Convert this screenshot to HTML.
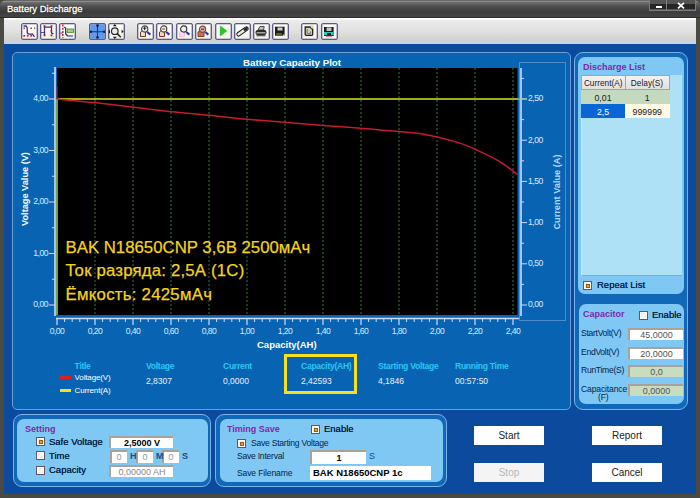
<!DOCTYPE html>
<html><head><meta charset="utf-8"><style>
*{margin:0;padding:0;box-sizing:border-box}
html,body{width:700px;height:498px;overflow:hidden;background:#4a4a42;font-family:"Liberation Sans",sans-serif}
.a{position:absolute;white-space:nowrap}
#titlebar{left:0;top:0;width:700px;height:18px;background:linear-gradient(#555 0,#8c8c8c 1.5px,#6c6c6c 2.5px,#4c4c4c 7px,#3c3c3c 12px,#444 16.5px,#1e1e1e 18px);border-radius:6px 6px 0 0}
#ttl{left:7px;top:3px;font-size:9.5px;color:#fff;-webkit-text-stroke:0.3px #fff;text-shadow:0 0 2px #111}
#toolbar{left:4px;top:18px;width:692px;height:26px;background:linear-gradient(#fff 0,#fff 1px,#ececec 2px,#e2e2e2 12px,#d2d0ce 23.5px,#c2d6e6 24.5px,#c2d6e6 26px)}
#main{left:4px;top:44px;width:692px;height:450px;background:#0c4a9e}
.tb{width:17px;height:17px;top:23px;border:1px solid #5c5c88;border-radius:2px;background:linear-gradient(#fffffa,#f4f2e4);overflow:hidden;box-shadow:inset 0 0 0 0.6px #9a9cc0}
.tb svg{position:absolute;left:0;top:0}
.ppo{border-radius:9px;background:#1268b8;border:1px solid #78b2e8}
.ppi{border-radius:7px;background:#80c8f4}
.ptl{font-size:9px;font-weight:bold;color:#8226a8}
.lbl{font-size:8.5px;color:#062446;text-shadow:0 0 0.3px #062446}
.chk{width:9px;height:9px;border:1px solid #5c5866;background:linear-gradient(135deg,#f0dccc,#fff6ee 55%,#e6d6c8);box-shadow:inset 0 0 0 1px #fffaf4}
.chk.on:after{content:"";position:absolute;left:1.5px;top:1.5px;width:4px;height:4px;box-sizing:border-box;background:#e4a030;border:1px solid #985a18}
.inp{background:#fff;border-top:2px solid #a8a298;border-left:2px solid #a8a298;font-size:9px;text-align:center;color:#333}
.wb{background:#fff;font-size:10px;color:#222;text-align:center}
.st{font-size:8.6px;letter-spacing:-0.3px;font-weight:bold;color:#2cc6f2}
.sv{font-size:8.5px;color:#e8f0ff}
</style></head><body>
<div id="titlebar" class="a"></div>
<div id="ttl" class="a">Battery Discharge</div>
<div class="a" style="left:649px;top:0;width:47px;height:11px;background:#555;border:1px solid #7c7c7c;border-top:none"></div>
<div class="a" style="left:650px;top:3.5px;width:16px;height:5.5px;background:#262626"></div>
<div class="a" style="left:667px;top:3.5px;width:28px;height:5.5px;background:#262626"></div>
<div class="a" style="left:666px;top:0;width:1px;height:10px;background:#7c7c7c"></div>
<div class="a" style="left:656px;top:6px;width:6px;height:2px;background:#fff"></div>
<svg class="a" style="left:676.5px;top:2px" width="8" height="7"><path d="M1 0.8L7 6.4M7 0.8L1 6.4" stroke="#fff" stroke-width="1.7"/></svg>
<div id="toolbar" class="a"></div>
<div id="main" class="a"></div>
<div class="a tb" style="left:20.5px;"><svg width="17" height="17" viewBox="0 0 17 17" style="left:-1px;top:-1px"><g fill="#a04030"><rect x="2.5" y="4.5" width="1.5" height="1.5"/><rect x="9.5" y="4.5" width="1.5" height="1.5"/><rect x="13" y="4.5" width="1.3" height="1.3"/></g><g fill="#e01030"><rect x="2.3" y="12" width="1.8" height="1.6"/><rect x="5.8" y="12" width="1.8" height="1.6"/><rect x="9.3" y="12" width="1.8" height="1.6"/></g><rect x="11.5" y="9.5" width="1.3" height="1.3" fill="#f0e040"/><path d="M2.5,3 H5 L6.2,4.6 V9.5 Q6.6,11 8,11.2 H11.5 L13.5,13.8" fill="none" stroke="#4a20a0" stroke-width="1.3"/></svg></div>
<div class="a tb" style="left:40px;"><svg width="17" height="17" viewBox="0 0 17 17" style="left:-1px;top:-1px"><path d="M0.5,9.5 H4.5" stroke="#4050c0" stroke-width="1.2"/><path d="M4.5,3 V12.5 M4.5,4.2 H11.5 V10 L13.5,10.8" fill="none" stroke="#4a20a0" stroke-width="1.3"/><g fill="#903020"><rect x="3.6" y="2.2" width="1.8" height="1.8"/><rect x="3.6" y="11.5" width="1.8" height="1.8"/><rect x="10.6" y="2.2" width="1.8" height="1.8"/><rect x="10.6" y="11.5" width="1.8" height="1.8"/><rect x="10.6" y="7" width="1.6" height="1.6" fill="#c02030"/></g><g fill="#f0d060"><rect x="3" y="7" width="1.2" height="1.2"/><rect x="13" y="13" width="1.2" height="1.2"/></g></svg></div>
<div class="a tb" style="left:59px;"><svg width="17" height="17" viewBox="0 0 17 17" style="left:-1px;top:-1px"><path d="M3.8,1.5 V15" stroke="#e02030" stroke-width="1.6" stroke-dasharray="2,1.2"/><path d="M0,10 H3.8" stroke="#4060c0" stroke-width="1.2"/><path d="M5.2,4 L6.7,5 V11 L8.7,13 H14" fill="none" stroke="#202870" stroke-width="1.2"/><rect x="8.2" y="6" width="6.2" height="3.4" fill="#a8d088" stroke="#509030" stroke-width="0.9"/></svg></div>
<div class="a tb" style="left:88.7px;background:#5b9cf2;border-color:#3a62c0;"><svg width="17" height="17" viewBox="0 0 17 17" style="left:-1px;top:-1px"><path d="M8.5,2.5 V14.5 M1.5,8.8 H15.5" stroke="#1a3080" stroke-width="1.1"/><g fill="#101840"><circle cx="8.5" cy="2.5" r="1.3"/><circle cx="8.5" cy="14.5" r="1.3"/><circle cx="1.8" cy="8.8" r="1.2"/><circle cx="15.2" cy="8.8" r="1.2"/></g></svg></div>
<div class="a tb" style="left:108.2px;"><svg width="17" height="17" viewBox="0 0 17 17" style="left:-1px;top:-1px"><circle cx="6.8" cy="8.2" r="3.3" fill="#e8eee0" stroke="#282828" stroke-width="1.2"/><path d="M9.2,10.6 L12.8,14.2" stroke="#282828" stroke-width="1.6"/><g fill="#181818"><path d="M4.8,3.3 H8.8 L6.8,1.1Z"/><path d="M4.8,13.8 H8.8 L6.8,16Z"/><path d="M2,6.4 V10.4 L0.2,8.4Z"/><path d="M13.6,6.4 V10.4 L15.6,8.4Z"/></g></svg></div>
<div class="a tb" style="left:137.1px;"><svg width="17" height="17" viewBox="0 0 17 17" style="left:-1px;top:-1px"><path d="M3.5,13.5 V9 L5.5,7.5 L8.5,9 V13.5Z" fill="#f0e0c8" stroke="#703820" stroke-width="1"/><circle cx="7.7" cy="6" r="3.1" fill="#f4f4ee" stroke="#484848" stroke-width="1.2"/><path d="M6.2,5.2 H9.2 M7.7,3.7 V7.2" stroke="#202020" stroke-width="1"/><path d="M10.3,9 L13.3,11.6" stroke="#3030c0" stroke-width="2.2"/></svg></div>
<div class="a tb" style="left:156.4px;"><svg width="17" height="17" viewBox="0 0 17 17" style="left:-1px;top:-1px"><path d="M3.5,13.5 V9 L5.5,7.5 L8.5,9 V13.5Z" fill="#f0d8b8" stroke="#903020" stroke-width="1"/><circle cx="7.7" cy="6" r="3.1" fill="#f4f4ee" stroke="#484848" stroke-width="1.2"/><path d="M6.2,6 H9.2" stroke="#b02020" stroke-width="1.1"/><path d="M10.3,9 L13.3,11.6" stroke="#3030c0" stroke-width="2.2"/></svg></div>
<div class="a tb" style="left:175.7px;"><svg width="17" height="17" viewBox="0 0 17 17" style="left:-1px;top:-1px"><path d="M3.5,13.5 V9 L5.5,7.5 L8.5,9 V13.5Z" fill="#f4dce4" stroke="#e8b8c8" stroke-width="0.8"/><circle cx="7.7" cy="6" r="3.1" fill="#f4eef4" stroke="#383838" stroke-width="1.2"/><path d="M10.3,9 L13.3,11.6" stroke="#3030c0" stroke-width="2.2"/></svg></div>
<div class="a tb" style="left:195.3px;"><svg width="17" height="17" viewBox="0 0 17 17" style="left:-1px;top:-1px"><path d="M3,13.5 V9 L5.5,7 L9,9 V13.5Z" fill="#c87050" stroke="#904020" stroke-width="1"/><circle cx="7.5" cy="6.3" r="3.1" fill="#d8b8a8" stroke="#705040" stroke-width="1.2"/><rect x="6" y="5.6" width="3" height="1.5" fill="#c02020"/><path d="M10.3,9 L13.3,11.6" stroke="#3030c0" stroke-width="2.2"/></svg></div>
<div class="a tb" style="left:214.5px;"><svg width="17" height="17" viewBox="0 0 17 17" style="left:-1px;top:-1px"><path d="M5.4,3.1 L11.7,8 L5.4,12.7Z" fill="#22cc22" stroke="#18a018" stroke-width="0.6"/></svg></div>
<div class="a tb" style="left:233.6px;"><svg width="17" height="17" viewBox="0 0 17 17" style="left:-1px;top:-1px"><path d="M4.6,11.2 L12.4,5.6" stroke="#1e1e1e" stroke-width="4.6" stroke-linecap="round"/><path d="M4.6,11.2 L12.4,5.6" stroke="#ecece4" stroke-width="2.6" stroke-linecap="round"/><path d="M10.9,6.7 L12.4,5.6" stroke="#2a2a2a" stroke-width="2.8" stroke-linecap="round"/></svg></div>
<div class="a tb" style="left:253.2px;"><svg width="17" height="17" viewBox="0 0 17 17" style="left:-1px;top:-1px"><path d="M5,7 L6.8,3.6 H11.2 L10.6,7Z" fill="#c8c8c8" stroke="#303030" stroke-width="0.9"/><rect x="2.5" y="7" width="11" height="5" rx="2.2" fill="#2a2a2a"/><rect x="3.5" y="9.3" width="9" height="1.1" fill="#d8d8c8"/><rect x="3.5" y="12" width="9" height="1.3" fill="#606060"/></svg></div>
<div class="a tb" style="left:271.9px;"><svg width="17" height="17" viewBox="0 0 17 17" style="left:-1px;top:-1px"><rect x="3" y="3.7" width="9.6" height="9" fill="#1c1c1c"/><rect x="5.5" y="4.5" width="5" height="3" fill="#d0d0c8"/><rect x="4.3" y="10" width="5.5" height="2.5" fill="#586828"/><rect x="11" y="11.5" width="1.3" height="1.3" fill="#e8e8e0"/></svg></div>
<div class="a tb" style="left:301.2px;"><svg width="17" height="17" viewBox="0 0 17 17" style="left:-1px;top:-1px"><path d="M4.2,4 H9 L11.7,6.6 V11.6 Q11.7,12.4 10.9,12.4 H5 Q4.2,12.4 4.2,11.6Z" fill="#d4ccbc" stroke="#1e1e1e" stroke-width="1.3"/><path d="M6.2,6 V10.5 H9.5 V8.5" fill="none" stroke="#807868" stroke-width="1"/><path d="M9.8,2.2 L12.8,5.6 M12.6,2.4 L10,5.2" stroke="#e8e820" stroke-width="1.2"/></svg></div>
<div class="a tb" style="left:320.5px;"><svg width="17" height="17" viewBox="0 0 17 17" style="left:-1px;top:-1px"><rect x="3" y="4" width="9.6" height="9" fill="#1a1a1a"/><rect x="5.5" y="4.5" width="5" height="3.5" fill="#c4c4c4"/><rect x="3" y="9" width="9.6" height="3" fill="#20d0b4"/><rect x="6" y="10" width="4" height="3" fill="#101030"/><rect x="5" y="12.6" width="6" height="0.9" fill="#e02040"/></svg></div>
<div class="a" style="left:12px;top:52px;width:559px;height:358px;border-radius:5px;background:#0864b2;border:1.5px solid #6a9ed4"></div>
<div class="a" style="left:243px;top:57px;font-size:9.75px;font-weight:bold;color:#fff">Battery Capacity Plot</div>
<svg class="a" style="left:0;top:0" width="700" height="498"><rect x="519.5" y="62.5" width="46" height="258" fill="none" stroke="#4d8ccc" stroke-width="1"/><rect x="57" y="68" width="461" height="247" fill="#000"/><line x1="95.0" y1="68" x2="95.0" y2="315" stroke="#367a3e" stroke-width="1" stroke-dasharray="2,2"/><line x1="133.0" y1="68" x2="133.0" y2="315" stroke="#367a3e" stroke-width="1" stroke-dasharray="2,2"/><line x1="171.0" y1="68" x2="171.0" y2="315" stroke="#367a3e" stroke-width="1" stroke-dasharray="2,2"/><line x1="209.0" y1="68" x2="209.0" y2="315" stroke="#367a3e" stroke-width="1" stroke-dasharray="2,2"/><line x1="247.0" y1="68" x2="247.0" y2="315" stroke="#367a3e" stroke-width="1" stroke-dasharray="2,2"/><line x1="285.0" y1="68" x2="285.0" y2="315" stroke="#367a3e" stroke-width="1" stroke-dasharray="2,2"/><line x1="323.0" y1="68" x2="323.0" y2="315" stroke="#367a3e" stroke-width="1" stroke-dasharray="2,2"/><line x1="361.0" y1="68" x2="361.0" y2="315" stroke="#367a3e" stroke-width="1" stroke-dasharray="2,2"/><line x1="399.0" y1="68" x2="399.0" y2="315" stroke="#367a3e" stroke-width="1" stroke-dasharray="2,2"/><line x1="437.0" y1="68" x2="437.0" y2="315" stroke="#367a3e" stroke-width="1" stroke-dasharray="2,2"/><line x1="475.0" y1="68" x2="475.0" y2="315" stroke="#367a3e" stroke-width="1" stroke-dasharray="2,2"/><line x1="513.0" y1="68" x2="513.0" y2="315" stroke="#367a3e" stroke-width="1" stroke-dasharray="2,2"/><line x1="55" y1="67" x2="55" y2="316" stroke="#c8dcff" stroke-width="1.6"/><line x1="49" y1="305.0" x2="55" y2="305.0" stroke="#c8dcff" stroke-width="1"/><line x1="52" y1="279.25" x2="55" y2="279.25" stroke="#c8dcff" stroke-width="1"/><line x1="49" y1="253.5" x2="55" y2="253.5" stroke="#c8dcff" stroke-width="1"/><line x1="52" y1="227.75" x2="55" y2="227.75" stroke="#c8dcff" stroke-width="1"/><line x1="49" y1="202.0" x2="55" y2="202.0" stroke="#c8dcff" stroke-width="1"/><line x1="52" y1="176.25" x2="55" y2="176.25" stroke="#c8dcff" stroke-width="1"/><line x1="49" y1="150.5" x2="55" y2="150.5" stroke="#c8dcff" stroke-width="1"/><line x1="52" y1="124.75" x2="55" y2="124.75" stroke="#c8dcff" stroke-width="1"/><line x1="49" y1="99.0" x2="55" y2="99.0" stroke="#c8dcff" stroke-width="1"/><line x1="52" y1="73.25" x2="55" y2="73.25" stroke="#c8dcff" stroke-width="1"/><line x1="521" y1="68" x2="521" y2="316" stroke="#c8dcff" stroke-width="1.6"/><line x1="521" y1="305.0" x2="527" y2="305.0" stroke="#c8dcff" stroke-width="1"/><line x1="521" y1="284.4" x2="524" y2="284.4" stroke="#c8dcff" stroke-width="1"/><line x1="521" y1="263.8" x2="527" y2="263.8" stroke="#c8dcff" stroke-width="1"/><line x1="521" y1="243.2" x2="524" y2="243.2" stroke="#c8dcff" stroke-width="1"/><line x1="521" y1="222.6" x2="527" y2="222.6" stroke="#c8dcff" stroke-width="1"/><line x1="521" y1="202.0" x2="524" y2="202.0" stroke="#c8dcff" stroke-width="1"/><line x1="521" y1="181.39999999999998" x2="527" y2="181.39999999999998" stroke="#c8dcff" stroke-width="1"/><line x1="521" y1="160.79999999999998" x2="524" y2="160.79999999999998" stroke="#c8dcff" stroke-width="1"/><line x1="521" y1="140.2" x2="527" y2="140.2" stroke="#c8dcff" stroke-width="1"/><line x1="521" y1="119.6" x2="524" y2="119.6" stroke="#c8dcff" stroke-width="1"/><line x1="521" y1="99.0" x2="527" y2="99.0" stroke="#c8dcff" stroke-width="1"/><line x1="521" y1="78.39999999999998" x2="524" y2="78.39999999999998" stroke="#c8dcff" stroke-width="1"/><line x1="56" y1="318.5" x2="519" y2="318.5" stroke="#c8dcff" stroke-width="1.4"/><line x1="57.0" y1="318" x2="57.0" y2="325" stroke="#c8dcff" stroke-width="1.2"/><line x1="64.6" y1="318" x2="64.6" y2="322" stroke="#c8dcff" stroke-width="1"/><line x1="72.2" y1="318" x2="72.2" y2="322" stroke="#c8dcff" stroke-width="1"/><line x1="79.8" y1="318" x2="79.8" y2="322" stroke="#c8dcff" stroke-width="1"/><line x1="87.4" y1="318" x2="87.4" y2="322" stroke="#c8dcff" stroke-width="1"/><line x1="95.0" y1="318" x2="95.0" y2="325" stroke="#c8dcff" stroke-width="1.2"/><line x1="102.6" y1="318" x2="102.6" y2="322" stroke="#c8dcff" stroke-width="1"/><line x1="110.2" y1="318" x2="110.2" y2="322" stroke="#c8dcff" stroke-width="1"/><line x1="117.8" y1="318" x2="117.8" y2="322" stroke="#c8dcff" stroke-width="1"/><line x1="125.4" y1="318" x2="125.4" y2="322" stroke="#c8dcff" stroke-width="1"/><line x1="133.0" y1="318" x2="133.0" y2="325" stroke="#c8dcff" stroke-width="1.2"/><line x1="140.6" y1="318" x2="140.6" y2="322" stroke="#c8dcff" stroke-width="1"/><line x1="148.2" y1="318" x2="148.2" y2="322" stroke="#c8dcff" stroke-width="1"/><line x1="155.8" y1="318" x2="155.8" y2="322" stroke="#c8dcff" stroke-width="1"/><line x1="163.4" y1="318" x2="163.4" y2="322" stroke="#c8dcff" stroke-width="1"/><line x1="171.0" y1="318" x2="171.0" y2="325" stroke="#c8dcff" stroke-width="1.2"/><line x1="178.6" y1="318" x2="178.6" y2="322" stroke="#c8dcff" stroke-width="1"/><line x1="186.2" y1="318" x2="186.2" y2="322" stroke="#c8dcff" stroke-width="1"/><line x1="193.8" y1="318" x2="193.8" y2="322" stroke="#c8dcff" stroke-width="1"/><line x1="201.4" y1="318" x2="201.4" y2="322" stroke="#c8dcff" stroke-width="1"/><line x1="209.0" y1="318" x2="209.0" y2="325" stroke="#c8dcff" stroke-width="1.2"/><line x1="216.6" y1="318" x2="216.6" y2="322" stroke="#c8dcff" stroke-width="1"/><line x1="224.2" y1="318" x2="224.2" y2="322" stroke="#c8dcff" stroke-width="1"/><line x1="231.8" y1="318" x2="231.8" y2="322" stroke="#c8dcff" stroke-width="1"/><line x1="239.4" y1="318" x2="239.4" y2="322" stroke="#c8dcff" stroke-width="1"/><line x1="247.0" y1="318" x2="247.0" y2="325" stroke="#c8dcff" stroke-width="1.2"/><line x1="254.6" y1="318" x2="254.6" y2="322" stroke="#c8dcff" stroke-width="1"/><line x1="262.2" y1="318" x2="262.2" y2="322" stroke="#c8dcff" stroke-width="1"/><line x1="269.8" y1="318" x2="269.8" y2="322" stroke="#c8dcff" stroke-width="1"/><line x1="277.4" y1="318" x2="277.4" y2="322" stroke="#c8dcff" stroke-width="1"/><line x1="285.0" y1="318" x2="285.0" y2="325" stroke="#c8dcff" stroke-width="1.2"/><line x1="292.6" y1="318" x2="292.6" y2="322" stroke="#c8dcff" stroke-width="1"/><line x1="300.2" y1="318" x2="300.2" y2="322" stroke="#c8dcff" stroke-width="1"/><line x1="307.8" y1="318" x2="307.8" y2="322" stroke="#c8dcff" stroke-width="1"/><line x1="315.4" y1="318" x2="315.4" y2="322" stroke="#c8dcff" stroke-width="1"/><line x1="323.0" y1="318" x2="323.0" y2="325" stroke="#c8dcff" stroke-width="1.2"/><line x1="330.6" y1="318" x2="330.6" y2="322" stroke="#c8dcff" stroke-width="1"/><line x1="338.2" y1="318" x2="338.2" y2="322" stroke="#c8dcff" stroke-width="1"/><line x1="345.8" y1="318" x2="345.8" y2="322" stroke="#c8dcff" stroke-width="1"/><line x1="353.4" y1="318" x2="353.4" y2="322" stroke="#c8dcff" stroke-width="1"/><line x1="361.0" y1="318" x2="361.0" y2="325" stroke="#c8dcff" stroke-width="1.2"/><line x1="368.6" y1="318" x2="368.6" y2="322" stroke="#c8dcff" stroke-width="1"/><line x1="376.2" y1="318" x2="376.2" y2="322" stroke="#c8dcff" stroke-width="1"/><line x1="383.8" y1="318" x2="383.8" y2="322" stroke="#c8dcff" stroke-width="1"/><line x1="391.4" y1="318" x2="391.4" y2="322" stroke="#c8dcff" stroke-width="1"/><line x1="399.0" y1="318" x2="399.0" y2="325" stroke="#c8dcff" stroke-width="1.2"/><line x1="406.6" y1="318" x2="406.6" y2="322" stroke="#c8dcff" stroke-width="1"/><line x1="414.2" y1="318" x2="414.2" y2="322" stroke="#c8dcff" stroke-width="1"/><line x1="421.8" y1="318" x2="421.8" y2="322" stroke="#c8dcff" stroke-width="1"/><line x1="429.4" y1="318" x2="429.4" y2="322" stroke="#c8dcff" stroke-width="1"/><line x1="437.0" y1="318" x2="437.0" y2="325" stroke="#c8dcff" stroke-width="1.2"/><line x1="444.6" y1="318" x2="444.6" y2="322" stroke="#c8dcff" stroke-width="1"/><line x1="452.2" y1="318" x2="452.2" y2="322" stroke="#c8dcff" stroke-width="1"/><line x1="459.8" y1="318" x2="459.8" y2="322" stroke="#c8dcff" stroke-width="1"/><line x1="467.4" y1="318" x2="467.4" y2="322" stroke="#c8dcff" stroke-width="1"/><line x1="475.0" y1="318" x2="475.0" y2="325" stroke="#c8dcff" stroke-width="1.2"/><line x1="482.6" y1="318" x2="482.6" y2="322" stroke="#c8dcff" stroke-width="1"/><line x1="490.2" y1="318" x2="490.2" y2="322" stroke="#c8dcff" stroke-width="1"/><line x1="497.8" y1="318" x2="497.8" y2="322" stroke="#c8dcff" stroke-width="1"/><line x1="505.4" y1="318" x2="505.4" y2="322" stroke="#c8dcff" stroke-width="1"/><line x1="513.0" y1="318" x2="513.0" y2="325" stroke="#c8dcff" stroke-width="1.2"/><line x1="57" y1="315" x2="57" y2="99" stroke="#70a050" stroke-width="2"/><line x1="517.5" y1="68" x2="517.5" y2="315" stroke="#0a3a0a" stroke-width="1"/><polyline points="57,99 518,99" fill="none" stroke="#a4aa18" stroke-width="1.8"/><line x1="518" y1="99" x2="527" y2="99" stroke="#a8c8a0" stroke-width="1"/><line x1="57" y1="86" x2="57" y2="99" stroke="#903050" stroke-width="1.2"/><path d="M57,99 C63.3,99.6 81.8,101.2 94.6,102.6 C107.4,104.0 121.2,105.8 134,107.3 C146.8,108.8 159.2,110.4 171.7,111.7 C184.2,113.0 196.4,113.9 209,115.2 C221.6,116.5 233.5,118.0 247,119.3 C260.5,120.5 277.4,121.7 290,122.7 C302.6,123.7 311.1,124.5 322.9,125.4 C334.7,126.3 348.0,127.2 360.6,128.2 C373.2,129.2 387.6,130.6 398.3,131.6 C409.0,132.6 415.0,132.6 425,134.4 C435.0,136.2 449.9,140.1 458.3,142.6 C466.7,145.1 468.5,146.3 475.4,149.4 C482.2,152.5 492.4,157.2 499.4,161.4 C506.4,165.6 514.5,172.3 517.5,174.5" fill="none" stroke="#c41c28" stroke-width="1.5"/></svg>
<div class="a" style="left:18px;width:30px;text-align:right;top:299.4px;font-size:8.6px;letter-spacing:-0.5px;color:#dce8ff">0,00</div>
<div class="a" style="left:18px;width:30px;text-align:right;top:247.9px;font-size:8.6px;letter-spacing:-0.5px;color:#dce8ff">1,00</div>
<div class="a" style="left:18px;width:30px;text-align:right;top:196.4px;font-size:8.6px;letter-spacing:-0.5px;color:#dce8ff">2,00</div>
<div class="a" style="left:18px;width:30px;text-align:right;top:144.9px;font-size:8.6px;letter-spacing:-0.5px;color:#dce8ff">3,00</div>
<div class="a" style="left:18px;width:30px;text-align:right;top:93.4px;font-size:8.6px;letter-spacing:-0.5px;color:#dce8ff">4,00</div>
<div class="a" style="left:528px;top:299.4px;font-size:8.6px;letter-spacing:-0.5px;color:#dce8ff">0,00</div>
<div class="a" style="left:528px;top:258.2px;font-size:8.6px;letter-spacing:-0.5px;color:#dce8ff">0,50</div>
<div class="a" style="left:528px;top:217.0px;font-size:8.6px;letter-spacing:-0.5px;color:#dce8ff">1,00</div>
<div class="a" style="left:528px;top:175.79999999999998px;font-size:8.6px;letter-spacing:-0.5px;color:#dce8ff">1,50</div>
<div class="a" style="left:528px;top:134.6px;font-size:8.6px;letter-spacing:-0.5px;color:#dce8ff">2,00</div>
<div class="a" style="left:528px;top:93.4px;font-size:8.6px;letter-spacing:-0.5px;color:#dce8ff">2,50</div>
<div class="a" style="left:37.0px;width:40px;text-align:center;top:326px;font-size:8.6px;letter-spacing:-0.5px;color:#dce8ff">0,00</div>
<div class="a" style="left:75.0px;width:40px;text-align:center;top:326px;font-size:8.6px;letter-spacing:-0.5px;color:#dce8ff">0,20</div>
<div class="a" style="left:113.0px;width:40px;text-align:center;top:326px;font-size:8.6px;letter-spacing:-0.5px;color:#dce8ff">0,40</div>
<div class="a" style="left:151.0px;width:40px;text-align:center;top:326px;font-size:8.6px;letter-spacing:-0.5px;color:#dce8ff">0,60</div>
<div class="a" style="left:189.0px;width:40px;text-align:center;top:326px;font-size:8.6px;letter-spacing:-0.5px;color:#dce8ff">0,80</div>
<div class="a" style="left:227.0px;width:40px;text-align:center;top:326px;font-size:8.6px;letter-spacing:-0.5px;color:#dce8ff">1,00</div>
<div class="a" style="left:265.0px;width:40px;text-align:center;top:326px;font-size:8.6px;letter-spacing:-0.5px;color:#dce8ff">1,20</div>
<div class="a" style="left:303.0px;width:40px;text-align:center;top:326px;font-size:8.6px;letter-spacing:-0.5px;color:#dce8ff">1,40</div>
<div class="a" style="left:341.0px;width:40px;text-align:center;top:326px;font-size:8.6px;letter-spacing:-0.5px;color:#dce8ff">1,60</div>
<div class="a" style="left:379.0px;width:40px;text-align:center;top:326px;font-size:8.6px;letter-spacing:-0.5px;color:#dce8ff">1,80</div>
<div class="a" style="left:417.0px;width:40px;text-align:center;top:326px;font-size:8.6px;letter-spacing:-0.5px;color:#dce8ff">2,00</div>
<div class="a" style="left:455.0px;width:40px;text-align:center;top:326px;font-size:8.6px;letter-spacing:-0.5px;color:#dce8ff">2,20</div>
<div class="a" style="left:493.0px;width:40px;text-align:center;top:326px;font-size:8.6px;letter-spacing:-0.5px;color:#dce8ff">2,40</div>
<div class="a" style="left:257px;top:338.5px;font-size:9.5px;font-weight:bold;color:#fff">Capacity(AH)</div>
<div class="a" style="left:24.5px;top:189.4px;width:0;height:0"><div class="a" style="left:-45px;top:-6px;width:90px;height:12px;line-height:12px;text-align:center;transform:rotate(-90deg);font-size:9.2px;font-weight:bold;color:#fff">Voltage Value (V)</div></div>
<div class="a" style="left:556.6px;top:192.2px;width:0;height:0"><div class="a" style="left:-45px;top:-6px;width:90px;height:12px;line-height:12px;text-align:center;transform:rotate(-90deg);font-size:9.2px;font-weight:bold;color:#b0daff">Current Value (A)</div></div>
<div class="a" style="left:65.5px;top:238.2px;font-size:16.8px;letter-spacing:0px;color:#f4d41c;-webkit-text-stroke:0.25px #f4d41c">BAK N18650CNP 3,6В 2500мАч</div>
<div class="a" style="left:65.5px;top:261.4px;font-size:16.8px;letter-spacing:0.18px;color:#f4d41c;-webkit-text-stroke:0.25px #f4d41c">Ток разряда: 2,5А (1С)</div>
<div class="a" style="left:65.5px;top:284.59999999999997px;font-size:16.8px;letter-spacing:0.26px;color:#f4d41c;-webkit-text-stroke:0.25px #f4d41c">Ёмкость: 2425мАч</div>
<div class="a st" style="left:74.6px;top:360.5px">Title</div>
<div class="a" style="left:60px;top:376px;width:11px;height:3px;background:#d82020"></div>
<div class="a" style="left:60px;top:389px;width:11px;height:3px;background:#f0e020"></div>
<div class="a" style="left:74.6px;top:373px;font-size:8px;letter-spacing:-0.15px;color:#fff">Voltage(V)</div>
<div class="a" style="left:74.6px;top:385.5px;font-size:8px;letter-spacing:-0.15px;color:#fff">Current(A)</div>
<div class="a st" style="left:146px;top:360.5px">Voltage</div>
<div class="a sv" style="left:146px;top:376px">2,8307</div>
<div class="a st" style="left:223px;top:360.5px">Current</div>
<div class="a sv" style="left:223px;top:376px">0,0000</div>
<div class="a st" style="left:301px;top:360.5px">Capacity(AH)</div>
<div class="a sv" style="left:301px;top:376px">2,42593</div>
<div class="a st" style="left:378px;top:360.5px">Starting Voltage</div>
<div class="a sv" style="left:378px;top:376px">4,1846</div>
<div class="a st" style="left:455px;top:360.5px">Running Time</div>
<div class="a sv" style="left:455px;top:376px">00:57:50</div>
<div class="a" style="left:284px;top:354px;width:73px;height:40px;border:3px solid #f8e020"></div>
<div class="a ppo" style="left:574px;top:52px;width:113.5px;height:358px"></div>
<div class="a ppi" style="left:578px;top:56.5px;width:105.5px;height:237.5px"></div>
<div class="a ptl" style="left:583px;top:62px">Discharge List</div>
<div class="a" style="left:580.5px;top:75px;width:101.5px;height:200.5px;background:#aee0f6;border-bottom:1px solid #8ca4bc;border-left:1px solid #c8e8fa"></div>
<div class="a" style="left:581px;top:75px;width:44.5px;height:14.5px;background:linear-gradient(#f4f2f0,#e2e0de);border:1px solid #a4a4a4;font-size:8.3px;color:#202020;text-align:center;line-height:14px;">Current(A)</div>
<div class="a" style="left:624.5px;top:75px;width:45px;height:14.5px;background:linear-gradient(#f4f2f0,#e2e0de);border:1px solid #a4a4a4;font-size:8.3px;color:#202020;text-align:center;line-height:14px;">Delay(S)</div>
<div class="a" style="left:581px;top:89.5px;width:44px;height:14.5px;background:#c4dac0;font-size:8.3px;color:#202020;text-align:center;line-height:14px;font-size:8.8px;line-height:16.5px">0,01</div>
<div class="a" style="left:625px;top:89.5px;width:44.5px;height:14.5px;background:#c4dac0;font-size:8.3px;color:#202020;text-align:center;line-height:14px;font-size:8.8px;line-height:16.5px">1</div>
<div class="a" style="left:581px;top:104px;width:44px;height:14px;background:#0a66d4;font-size:8.3px;color:#202020;text-align:center;line-height:14px;font-size:8.8px;color:#fff;line-height:16.5px">2,5</div>
<div class="a" style="left:625px;top:104px;width:44.5px;height:14px;background:#fdf9e2;font-size:8.3px;color:#202020;text-align:center;line-height:14px;font-size:8.8px;line-height:16.5px">999999</div>
<div class="a chk on" style="left:583px;top:281px"></div>
<div class="a lbl" style="left:597px;top:279px;font-size:9.5px">Repeat List</div>
<div class="a ppi" style="left:578.5px;top:304px;width:105px;height:100px"></div>
<div class="a ptl" style="left:583px;top:309px">Capacitor</div>
<div class="a chk" style="left:639px;top:311px"></div>
<div class="a lbl" style="left:652px;top:309px;font-size:9.5px">Enable</div>
<div class="a lbl" style="left:581px;top:327.5px;font-size:8.6px;letter-spacing:-0.3px;text-shadow:none">StartVolt(V)</div>
<div class="a inp" style="left:628px;top:328px;width:55px;height:12px;background:#fff;line-height:10px;color:#555">45,0000</div>
<div class="a lbl" style="left:581px;top:346.5px;font-size:8.6px;letter-spacing:-0.3px;text-shadow:none">EndVolt(V)</div>
<div class="a inp" style="left:628px;top:347px;width:55px;height:12px;background:#fff;line-height:10px;color:#555">20,0000</div>
<div class="a lbl" style="left:581px;top:364.5px;font-size:8.6px;letter-spacing:-0.3px;text-shadow:none">RunTime(S)</div>
<div class="a inp" style="left:628px;top:365px;width:55px;height:12px;background:#c8dcc0;line-height:10px;color:#555">0,0</div>
<div class="a lbl" style="left:581px;top:383.5px;font-size:8.6px;letter-spacing:-0.15px;text-shadow:none">Capacitance</div>
<div class="a inp" style="left:628px;top:384px;width:55px;height:12px;background:#c8dcc0;line-height:10px;color:#555">0,0000</div>
<div class="a lbl" style="left:598px;top:391.5px;font-size:8.6px;letter-spacing:-0.2px;text-shadow:none">(F)</div>
<div class="a ppo" style="left:13px;top:414px;width:198px;height:73px"></div>
<div class="a ppi" style="left:17px;top:419px;width:191px;height:63px"></div>
<div class="a ptl" style="left:25px;top:424px">Setting</div>
<div class="a chk on" style="left:36px;top:437px"></div>
<div class="a chk" style="left:36px;top:451px"></div>
<div class="a chk" style="left:36px;top:466px"></div>
<div class="a lbl" style="left:49px;top:436px;font-size:9.5px">Safe Voltage</div>
<div class="a lbl" style="left:49px;top:450px;font-size:9.5px">Time</div>
<div class="a lbl" style="left:49px;top:464px;font-size:9.5px">Capacity</div>
<div class="a inp" style="left:109px;top:436px;width:64px;height:12px;line-height:10px;font-weight:bold;color:#000">2,5000 V</div>
<div class="a inp" style="left:109.5px;top:450px;width:17px;height:13px;line-height:11px;color:#999">0</div>
<div class="a inp" style="left:135.5px;top:450px;width:17px;height:13px;line-height:11px;color:#999">0</div>
<div class="a inp" style="left:161.5px;top:450px;width:17px;height:13px;line-height:11px;color:#999">0</div>
<div class="a" style="left:130px;top:451px;font-size:9px;font-weight:bold;color:#1a4a8a">H</div>
<div class="a" style="left:156px;top:451px;font-size:9px;font-weight:bold;color:#1a4a8a">M</div>
<div class="a" style="left:182px;top:451px;font-size:9px;font-weight:bold;color:#1a4a8a">S</div>
<div class="a inp" style="left:109px;top:465px;width:64px;height:12px;line-height:10px;color:#888">0,00000 AH</div>
<div class="a ppo" style="left:215px;top:414px;width:232px;height:73px"></div>
<div class="a ppi" style="left:220px;top:419px;width:223px;height:63px"></div>
<div class="a ptl" style="left:227px;top:424px">Timing Save</div>
<div class="a chk on" style="left:311px;top:425px"></div>
<div class="a lbl" style="left:324px;top:423px;font-size:9.5px">Enable</div>
<div class="a chk on" style="left:237px;top:439px"></div>
<div class="a lbl" style="left:251px;top:437.5px;font-size:8.6px;letter-spacing:-0.25px;text-shadow:none">Save Starting Voltage</div>
<div class="a lbl" style="left:237px;top:450.5px;font-size:8.6px;letter-spacing:-0.25px;text-shadow:none">Save Interval</div>
<div class="a lbl" style="left:237px;top:467.5px;font-size:8.6px;letter-spacing:-0.15px;text-shadow:none">Save Filename</div>
<div class="a inp" style="left:310px;top:450px;width:56px;height:14px;line-height:12px;font-weight:bold;color:#000">1</div>
<div class="a" style="left:369px;top:451px;font-size:9px;color:#1a4a8a">S</div>
<div class="a" style="left:310px;top:466px;width:121px;height:14px;background:#fff;font-size:9.5px;font-weight:bold;color:#000;line-height:14px;padding-left:3px">BAK N18650CNP 1c</div>
<div class="a wb" style="left:474px;top:426px;width:70px;height:19px;line-height:19px;color:#222;background:#fff">Start</div>
<div class="a wb" style="left:474px;top:463px;width:70px;height:19px;line-height:19px;color:#b8b8b8;background:#f4f4f4">Stop</div>
<div class="a wb" style="left:592px;top:426px;width:70px;height:19px;line-height:19px;color:#222;background:#fff">Report</div>
<div class="a wb" style="left:592px;top:463px;width:70px;height:19px;line-height:19px;color:#222;background:#fff">Cancel</div>
</body></html>
